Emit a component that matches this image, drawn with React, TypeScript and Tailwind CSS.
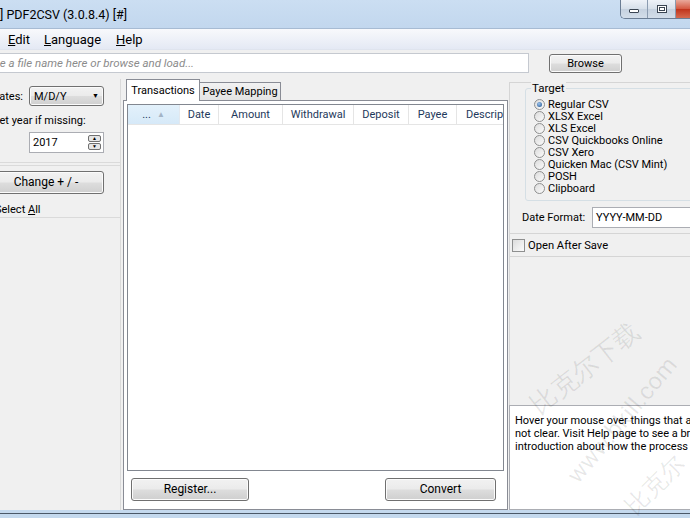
import React from 'react';

const BTN =
  'flex items-center justify-center rounded-[3px] border border-[#707070] bg-[linear-gradient(#f2f2f2_0%,#ebebeb_48%,#dddddd_52%,#cfcfcf_100%)] shadow-[inset_0_0_0_1px_#fbfbfb] text-[11px] text-black';

const TARGETS = [
  'Regular CSV',
  'XLSX Excel',
  'XLS Excel',
  'CSV Quickbooks Online',
  'CSV Xero',
  'Quicken Mac (CSV Mint)',
  'POSH',
  'Clipboard',
];

const COLUMNS: { label: string; w: string }[] = [
  { label: 'Date', w: 'w-[39px]' },
  { label: 'Amount', w: 'w-[64px]' },
  { label: 'Withdrawal', w: 'w-[71px]' },
  { label: 'Deposit', w: 'w-[55px]' },
  { label: 'Payee', w: 'w-[48px]' },
];

function Radio({ checked }: { checked?: boolean }) {
  return (
    <span className="flex h-[11px] w-[11px] shrink-0 items-center justify-center rounded-full border border-[#8e8f8f] bg-[linear-gradient(135deg,#dcdcdc,#fbfbfb)]">
      {checked && <span className="h-[5px] w-[5px] rounded-full bg-[radial-gradient(circle_at_40%_35%,#9cc4ee,#1c4f8c)]" />}
    </span>
  );
}

function TitleButtons() {
  return (
    <div className="absolute right-0 top-0 flex h-[19px] overflow-hidden rounded-bl-[5px] border-b border-l border-[#6b7d94]">
      <div className="flex w-[27px] items-center justify-center border-r border-[#8b9bb0] bg-[linear-gradient(#eef2f8,#d6dfea_50%,#c5d1df_51%,#d3dde9)]">
        <span className="mt-[4px] h-[4px] w-[10px] rounded-[1px] border border-[#3a4452] bg-white" />
      </div>
      <div className="flex w-[28px] items-center justify-center border-r border-[#8b9bb0] bg-[linear-gradient(#eef2f8,#d6dfea_50%,#c5d1df_51%,#d3dde9)]">
        <span className="flex h-[8px] w-[10px] items-center justify-center border border-[#3a4452] bg-white">
          <span className="h-[4px] w-[6px] border border-[#3a4452]" />
        </span>
      </div>
      <div className="w-[14px] bg-[linear-gradient(#e9a99b,#d4573f_50%,#c0341c_51%,#d66a4f)]" />
    </div>
  );
}

export default function App() {
  return (
    <div className="relative flex h-[518px] w-[690px] flex-col overflow-hidden bg-[#f0f0f0] font-[Roboto,sans-serif] text-[11px] leading-[13px] text-black">
      {/* title bar */}
      <div className="relative flex h-[29px] shrink-0 items-center border-b border-[#a7bbd3] bg-[linear-gradient(#cbdef2,#c2d7ee)]">
        <span className="whitespace-nowrap text-[12.5px]">] PDF2CSV (3.0.8.4) [#]</span>
        <TitleButtons />
      </div>

      {/* menu bar */}
      <div className="flex h-[21px] shrink-0 items-center border-b border-[#dfe4ee] bg-[linear-gradient(#f8f9fc,#e4e9f4)] text-[13px]">
        <span className="ml-[8px]"><u>E</u>dit</span>
        <span className="ml-[14px]"><u>L</u>anguage</span>
        <span className="ml-[15px]"><u>H</u>elp</span>
      </div>

      {/* file row */}
      <div className="mt-[3px] flex h-[20px] shrink-0 items-center">
        <div className="-ml-[4px] flex h-[20px] w-[533px] items-center overflow-hidden whitespace-nowrap border border-[#c5c9d0] bg-white text-[11.5px] italic text-[#8b8b8b]">
          <span className="-ml-[15px]">Type a file name here or browse and load...</span>
        </div>
        <div className={`${BTN} ml-[20px] h-[19px] w-[73px]`}>Browse</div>
      </div>

      {/* main */}
      <div className="mt-[6px] flex h-[431px] shrink-0">
        {/* left column */}
        <div className="flex w-[121px] shrink-0 flex-col border-r border-[#dadada]">
          <div className="mt-[1px] flex h-[83px] flex-col border-b border-[#dadada]">
            <div className="mt-[6px] flex h-[20px] items-center">
              <span className="-ml-[8px] w-[37px] whitespace-nowrap">Dates:</span>
              <div className={`${BTN} h-[20px] w-[75px] !justify-between px-[4px]`}>
                <span>M/D/Y</span>
                <span className="text-[7px] leading-none">▼</span>
              </div>
            </div>
            <span className="-ml-[7px] mt-[8px] whitespace-nowrap">Set year if missing:</span>
            <div className="ml-[29px] mt-[5px] flex h-[21px] w-[75px] items-center justify-between border border-[#abadb3] bg-white pl-[3px] pr-[2px]">
              <span>2017</span>
              <div className="flex flex-col gap-[1px]">
                <span className="flex h-[7px] w-[13px] items-center justify-center rounded-[2px] border border-[#707070] bg-[#e6e6e6] text-[5px] leading-none">▲</span>
                <span className="flex h-[7px] w-[13px] items-center justify-center rounded-[2px] border border-[#707070] bg-[#e6e6e6] text-[5px] leading-none">▼</span>
              </div>
            </div>
          </div>
          <div className="mt-[2px] flex h-[53px] flex-col border-b border-t border-[#dadada]">
            <div className={`${BTN} -ml-[12px] mt-[5px] h-[23px] w-[116px] text-[12px]`}>Change + / -</div>
            <span className="-ml-[5px] mt-[9px] whitespace-nowrap">Select <u>A</u>ll</span>
          </div>
        </div>

        {/* center: tabs */}
        <div className="ml-[2px] flex w-[385px] shrink-0 flex-col">
          <div className="relative z-10 flex h-[21px] items-end pl-[3px]">
            <div className="-mb-px flex h-[22px] w-[74px] items-center justify-center border border-b-0 border-[#898c95] bg-white">Transactions</div>
            <div className="flex h-[18px] w-[81px] items-center justify-center border border-b-0 border-l-0 border-[#898c95] bg-[linear-gradient(#f2f2f2,#e3e3e3)]">Payee Mapping</div>
          </div>
          <div className="flex flex-1 flex-col border border-[#898c95] bg-white px-[3px] pb-[8px] pt-[3px]">
            <div className="flex-1 border border-[#828790] bg-white">
              <div className="flex h-[20px] items-stretch overflow-hidden whitespace-nowrap border-b border-[#e5e5e5] text-[#1e395b]">
                <div className="relative flex w-[52px] shrink-0 items-center justify-center border-r border-[#e3e8ee] bg-[linear-gradient(#e3f1fb,#d6e9f8)] text-[#1e395b]">
                  <span>...</span>
                  <span className="ml-[6px] text-[8px] text-[#a3b4c6]">▲</span>
                </div>
                {COLUMNS.map((c) => (
                  <div key={c.label} className={`flex ${c.w} shrink-0 items-center justify-center border-r border-[#e5e5e5]`}>
                    {c.label}
                  </div>
                ))}
                <div className="flex flex-1 items-center overflow-hidden pl-[9px]">Description</div>
              </div>
            </div>
            <div className="mt-[7px] flex h-[23px] items-center justify-between pl-[4px] pr-[8px]">
              <div className={`${BTN} h-[23px] w-[118px] text-[12px]`}>Register...</div>
              <div className={`${BTN} h-[23px] w-[111px] text-[12px]`}>Convert</div>
            </div>
          </div>
        </div>

        {/* right column */}
        <div className="ml-[1px] flex w-[200px] shrink-0 flex-col">
          <div className="mt-[3px] flex h-[151px] flex-col border-l border-t border-[#d5d5d5]">
            <div className="relative ml-[15px] mt-[5px] h-[113px] rounded-[3px] border border-[#d5dfe5] pl-[8px] pt-[9px]">
              <span className="absolute -top-[7px] left-[5px] bg-[#f0f0f0] px-[1px] text-[11.5px]">Target</span>
              {TARGETS.map((t, i) => (
                <div key={t} className="flex h-[12px] items-center gap-[3px] whitespace-nowrap">
                  <Radio checked={i === 0} />
                  <span>{t}</span>
                </div>
              ))}
            </div>
            <div className="mt-[6px] flex h-[21px] items-center">
              <span className="ml-[12px] w-[70px] whitespace-nowrap">Date Format:</span>
              <div className="flex h-[21px] flex-1 items-center border border-[#abadb3] bg-white pl-[3px]">YYYY-MM-DD</div>
            </div>
          </div>
          <div className="flex h-[24px] items-center border-b border-l border-t border-[#d5d5d5]">
            <span className="ml-[2px] h-[13px] w-[13px] border border-[#8e8f8f] bg-[linear-gradient(135deg,#dcdcdc,#fbfbfb)]" />
            <span className="ml-[3px] text-[11.2px]">Open After Save</span>
          </div>
          <div className="flex-1 border-l border-[#d5d5d5]" />
          <div className="h-[105px] border border-[#abadb3] bg-white px-[5px] pt-[8px] text-[11px] leading-[13px]">
            <p className="whitespace-nowrap">Hover your mouse over things that are</p>
            <p className="whitespace-nowrap">not clear. Visit Help page to see a brief</p>
            <p className="whitespace-nowrap">introduction about how the process works.</p>
          </div>
        </div>
      </div>

      {/* window frame bottom */}
      <div className="flex-1 border-t-[3px] border-[#c4d9ee] bg-[#c4d9ee]">
        <div className="h-px bg-[#4a5868]" />
      </div>

      {/* watermark */}
      <div className="pointer-events-none absolute left-[585px] top-[368px] -translate-x-1/2 -translate-y-1/2 -rotate-[38deg] whitespace-nowrap text-[26px] leading-none text-black/[0.09]">比克尔下载</div>
      <div className="pointer-events-none absolute left-[622px] top-[420px] -translate-x-1/2 -translate-y-1/2 -rotate-[50deg] whitespace-nowrap text-[24px] leading-none text-black/[0.09]">www.bkill.com</div>
      <div className="pointer-events-none absolute left-[655px] top-[485px] -translate-x-1/2 -translate-y-1/2 -rotate-[45deg] whitespace-nowrap text-[24px] leading-none text-black/[0.09]">比克尔</div>
    </div>
  );
}
